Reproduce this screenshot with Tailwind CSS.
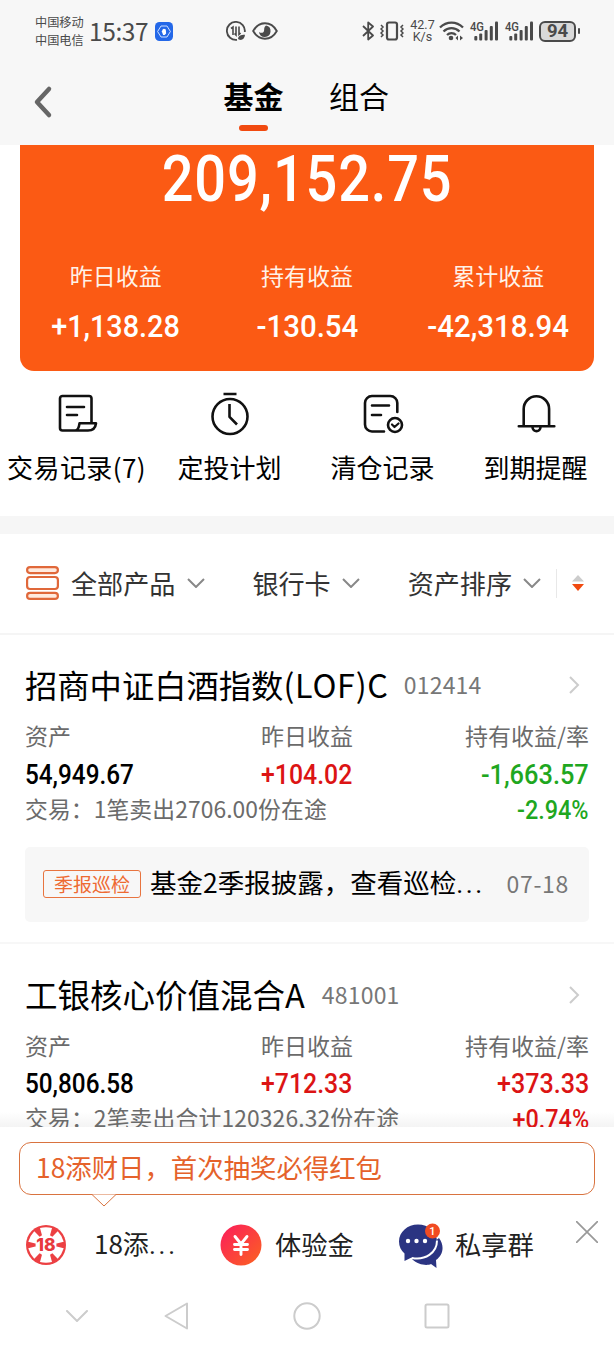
<!DOCTYPE html>
<html lang="zh-CN">
<head>
  <meta charset="UTF-8" />
  <meta name="viewport" content="width=device-width, initial-scale=1.0" />
  <title>基金</title>
  <script src="https://cdn.jsdelivr.net/npm/@tailwindcss/browser@4"></script>
  <style>
    body {
      font-family: 'Noto Sans CJK SC', sans-serif;
    }
    .num {
      font-family: Roboto, 'Noto Sans CJK SC', sans-serif;
    }
  </style>
</head>
<body class="bg-white text-black">
<div class="w-[614px] h-[1350px] overflow-hidden flex flex-col whitespace-nowrap">

  <!-- Header -->
  <header class="h-[145px] shrink-0 bg-[#f7f7f7]">
    <!-- Status bar -->
    <div class="h-[62px] pl-[35px] flex items-center text-[#4a4a4a]">
      <div class="w-[49px] text-[12.2px] leading-[18px]">
        <p>中国移动</p>
        <p>中国电信</p>
      </div>
      <span class="ml-[5px] -mt-px w-[60px] text-[24.500px] leading-8 tracking-[-0.4px]">15:37</span>
      <svg class="ml-[6px] shrink-0" width="18" height="19" viewBox="0 0 18 19" fill="none">
        <rect width="18" height="19" rx="4.5" fill="#2468e8"/>
        <path d="M6 4h6l3.4 5.5L12 15H6L2.6 9.500z" stroke="#cfe0ff" stroke-width="1"/>
        <path d="M6.800 9.500l1-2.200 1-.6 1 .2 1 .7.3 3.900-1.400 1.500H8.100z" fill="#fff"/>
      </svg>
      <svg class="ml-[53px] shrink-0" width="20" height="20" viewBox="0 0 20 20" fill="none" stroke="#4a4a4a" stroke-width="1.8">
        <path d="M18.800 11A9 9 0 1 0 11 18.800"/>
        <path d="M5 7.500L7 6v8M10 5.500v8.500L8.500 12.500M13 5.500v8l1.600-1.500" stroke-width="1.600"/>
        <path d="M12 18c.3-3 2.500-4.200 7-4.200-.2 3.500-2.500 5.700-5.500 5z" fill="#4a4a4a" stroke="none"/>
      </svg>
      <svg class="ml-[6px] shrink-0" width="26" height="18" viewBox="0 0 26 18" fill="none">
        <path d="M1.200 9C4 4 8 1.300 13 1.300S22 4 24.800 9C22 14 18 16.700 13 16.700S4 14 1.200 9z" stroke="#4a4a4a" stroke-width="1.900"/>
        <path d="M14 3.500a5.800 5.800 0 1 1-7 6.500c2 1.500 4.500 1 5-1 .4-2-.2-4 2-5.500z" fill="#4a4a4a"/>
      </svg>
      <svg class="ml-[84px] shrink-0" width="12" height="20" viewBox="0 0 12 20" fill="none" stroke="#4a4a4a" stroke-width="1.800" stroke-linejoin="round">
        <path d="M1 5l10 9.500L6.200 18.500v-17L11 5.500 1 15"/>
      </svg>
      <svg class="ml-[6px] shrink-0" width="24" height="20" viewBox="0 0 24 20" fill="none" stroke="#4a4a4a" stroke-width="1.500">
        <rect x="7" y="1.500" width="10" height="17" rx="2" stroke-width="2.200"/>
        <path d="M1 4l2 2-2 2 2 2-2 2 2 2-2 2M23 4l-2 2 2 2-2 2 2 2-2 2 2 2"/>
      </svg>
      <div class="num ml-[6px] w-[25px] text-center text-[12.500px] leading-[12px]">
        <p>42.7</p>
        <p>K/s</p>
      </div>
      <svg class="ml-[4px] shrink-0" width="25" height="20" viewBox="0 0 25 20" fill="none" stroke="#4a4a4a" stroke-width="2.300">
        <path d="M1 6.500c6.500-6.500 16.500-6.500 23 0M4.500 10.500c4.500-4.500 11.500-4.500 16 0M8 14c2.500-2.500 6.500-2.500 9 0"/>
        <circle cx="12" cy="17" r="2.300" fill="#4a4a4a" stroke="none"/>
        <path d="M19 14.500v5L16.500 17zM21 14.500v5l3-2.500z" fill="#4a4a4a" stroke="none"/>
      </svg>
      <svg class="num ml-[6px] shrink-0 overflow-visible" width="29" height="20" viewBox="0 0 29 20" fill="#4a4a4a">
        <text x="0" y="9.500" font-size="12.500" font-weight="500" textLength="14" lengthAdjust="spacingAndGlyphs">4G</text>
        <rect x="4.300" y="15" width="3" height="4.500" rx="1"/><rect x="9.200" y="12.500" width="3" height="7" rx="1"/><rect x="14.600" y="9" width="3" height="10.500" rx="1"/><rect x="19.800" y="5" width="3" height="14.500" rx="1"/><rect x="25" y=".5" width="3" height="19" rx="1"/>
      </svg>
      <svg class="num ml-[6px] shrink-0 overflow-visible" width="29" height="20" viewBox="0 0 29 20" fill="#4a4a4a">
        <text x="0" y="9.500" font-size="12.500" font-weight="500" textLength="14" lengthAdjust="spacingAndGlyphs">4G</text>
        <rect x="4.300" y="15" width="3" height="4.500" rx="1"/><rect x="9.200" y="12.500" width="3" height="7" rx="1"/><rect x="14.600" y="9" width="3" height="10.500" rx="1"/><rect x="19.800" y="5" width="3" height="14.500" rx="1"/><rect x="25" y=".5" width="3" height="19" rx="1"/>
      </svg>
      <div class="num ml-[5px] w-[37px] h-[21px] rounded-[6px] border-2 border-[#4a4a4a] bg-[#d9d9d9] flex items-center justify-center text-[18.500px] font-bold leading-none">94</div>
      <div class="ml-[2px] w-[2px] h-[6px] rounded bg-[#4a4a4a]"></div>
    </div>

    <!-- Tabs -->
    <div class="h-[83px] flex">
      <svg class="ml-[32px] mt-[23px]" width="22" height="34" viewBox="0 0 22 34" fill="none" stroke="#666" stroke-width="4.500" stroke-linecap="round" stroke-linejoin="round">
        <path d="M17 4L5 17l12 13"/>
      </svg>
      <div class="ml-[169px] w-[61px] flex flex-col items-center">
        <span class="mt-[13px] text-[30px] leading-10 font-bold">基金</span>
        <span class="mt-[10px] w-[29px] h-[6px] rounded-full bg-[#f14a10]"></span>
      </div>
      <span class="ml-[45px] mt-[13px] text-[30px] leading-10">组合</span>
    </div>
  </header>

  <main class="h-[982px] shrink-0 overflow-hidden">
    <!-- Asset card -->
    <section class="num mx-[20px] h-[226px] rounded-b-[14px] bg-[#fb5a14] text-white">
      <p class="h-[68px] text-center text-[65px] leading-[68px] font-medium tracking-[1px]"><span class="inline-block scale-x-[.86]">209,152.75</span></p>
      <div class="pt-[50px] grid grid-cols-3 text-center">
        <div>
          <p class="text-[23px] leading-[30px] text-[#fff2e8]">昨日收益</p>
          <p class="mt-[17px] text-[32px] leading-[32px] font-medium"><span class="inline-block scale-x-[.9]">+1,138.28</span></p>
        </div>
        <div>
          <p class="text-[23px] leading-[30px] text-[#fff2e8]">持有收益</p>
          <p class="mt-[17px] text-[32px] leading-[32px] font-medium"><span class="inline-block scale-x-[.92]">-130.54</span></p>
        </div>
        <div>
          <p class="text-[23px] leading-[30px] text-[#fff2e8]">累计收益</p>
          <p class="mt-[17px] text-[32px] leading-[32px] font-medium"><span class="inline-block scale-x-[.92]">-42,318.94</span></p>
        </div>
      </div>
    </section>

    <!-- Shortcuts -->
    <section class="h-[145px] pt-[21px] w-[612px] grid grid-cols-4 text-[26px] leading-8">
      <div class="flex flex-col items-center gap-[15px]">
        <svg width="44" height="44" viewBox="0 0 44 44" fill="none" stroke="#111" stroke-width="2.600" stroke-linecap="round" stroke-linejoin="round">
          <path d="M36.500 31V6.500a2.500 2.500 0 0 0-2.500-2.500H7.500A2.500 2.500 0 0 0 5 6.500V36a2.500 2.500 0 0 0 2.500 2.500H33c5 0 7.500-3 8-7.200H24.500c-.5 4-1.500 7.200-4.500 7.200M12 15h17M12 23h10"/>
        </svg>
        <span class="tracking-[0.400px]">交易记录(7)</span>
      </div>
      <div class="flex flex-col items-center gap-[15px]">
        <svg width="44" height="44" viewBox="0 0 44 44" fill="none" stroke="#111" stroke-width="2.600" stroke-linejoin="round">
          <circle cx="22" cy="24.500" r="17.500"/>
          <path d="M15.500 2h13M21.500 12v12.800l7.500 7.700"/>
        </svg>
        <span>定投计划</span>
      </div>
      <div class="flex flex-col items-center gap-[15px]">
        <svg width="44" height="44" viewBox="0 0 44 44" fill="none" stroke="#111" stroke-width="2.600" stroke-linecap="round" stroke-linejoin="round">
          <path d="M36.300 20v-9a7 7 0 0 0-7-7H11a7 7 0 0 0-7 7v21.500a7 7 0 0 0 7 7h12M11 13.500h17M11 23h9"/>
          <circle cx="34" cy="33" r="7"/>
          <path d="M31 32.500l2.500 2.500 4-3.500" stroke-width="2.200"/>
        </svg>
        <span>清仓记录</span>
      </div>
      <div class="flex flex-col items-center gap-[15px]">
        <svg width="44" height="44" viewBox="0 0 44 44" fill="none" stroke="#111" stroke-width="2.600" stroke-linecap="round">
          <path d="M9.700 34V17a12.700 12.700 0 0 1 25.400 0v17M4.800 34.300h35.500M18.500 35c0 5.500 8 5.500 8 0"/>
        </svg>
        <span>到期提醒</span>
      </div>
    </section>

    <div class="h-[18px] bg-[#f6f6f6]"></div>

    <!-- Filters -->
    <section class="h-[101px] pl-[26px] pb-px border-b-2 border-[#f5f5f5] flex items-center text-[26.100px] leading-8 text-[#333]">
      <svg width="33" height="34" viewBox="0 0 33 34" fill="#ffeade" stroke="#e0683a" stroke-width="2.200">
        <rect x="1.100" y="1.100" width="30.800" height="6" rx="3"/>
        <rect x="1.100" y="11" width="30.800" height="12" rx="3" fill="#fff"/>
        <rect x="1.100" y="26.900" width="30.800" height="6" rx="3"/>
      </svg>
      <span class="ml-[12px]">全部产品</span>
      <svg class="ml-[12px]" width="18" height="10" viewBox="0 0 18 10" fill="none" stroke="#888" stroke-width="2"><path d="M1 1l8 8 8-8"/></svg>
      <span class="ml-[47px]">银行卡</span>
      <svg class="ml-[11px]" width="18" height="10" viewBox="0 0 18 10" fill="none" stroke="#888" stroke-width="2"><path d="M1 1l8 8 8-8"/></svg>
      <span class="ml-[48px]">资产排序</span>
      <svg class="ml-[11px]" width="18" height="10" viewBox="0 0 18 10" fill="none" stroke="#888" stroke-width="2"><path d="M1 1l8 8 8-8"/></svg>
      <div class="ml-[15px] w-px h-[29px] bg-[#e8e8e8]"></div>
      <svg class="ml-[14px]" width="14" height="16" viewBox="0 0 14 16"><path d="M7 0l6 6.500H1z" fill="#ccc"/><path d="M7 16l6-7H1z" fill="#f14a10"/></svg>
    </section>

    <!-- Fund 1 -->
    <section class="h-[309px] px-[25px] pt-[29px] border-b-2 border-[#f7f7f7]">
      <div class="h-[40px] flex items-center">
        <h2 class="text-[32.300px] leading-10">招商中证白酒指数<span class="tracking-[0.750px]">(LOF)C</span></h2>
        <span class="ml-[15px] text-[23px] tracking-[0.2px] text-[#777]">012414</span>
        <svg class="ml-auto mt-px mr-[9px]" width="12" height="18" viewBox="0 0 12 18" fill="none" stroke="#ccc" stroke-width="2"><path d="M2 1l8 8-8 8"/></svg>
      </div>
      <div class="mt-[16px] grid grid-cols-[236px_1fr_auto] text-[23px] leading-[30px] text-[#6b6b6b]">
        <span>资产</span><span>昨日收益</span><span>持有收益/率</span>
      </div>
      <div class="num mt-[9px] grid grid-cols-[236px_1fr_auto] text-[27px] leading-[32px] font-medium">
        <span><span class="inline-block origin-left scale-x-[.9]">54,949.67</span></span>
        <span class="text-[#dc1414]"><span class="inline-block origin-left scale-x-[.92]">+104.02</span></span>
        <span class="text-[#1fa71f]"><span class="inline-block origin-right scale-x-[.94]">-1,663.57</span></span>
      </div>
      <div class="mt-[2px] h-[32px] flex justify-between text-[22.800px] leading-[31px] text-[#6b6b6b]">
        <span class="tracking-[0.100px]">交易：1笔卖出2706.00份在途</span>
        <span class="num text-[26px] leading-[35px] font-medium text-[#1fa71f]"><span class="inline-block origin-right scale-x-[.9]">-2.94%</span></span>
      </div>
      <div class="mt-[22px] h-[75px] rounded-[5px] bg-[#f7f7f7] pl-[18px] pr-[20px] pb-[2px] flex items-center">
        <span class="w-[98px] h-[28px] rounded-[3px] border border-[#e8743f] text-center text-[19px] leading-[25px] text-[#ee6a32]">季报巡检</span>
        <span class="ml-[9px] -mt-[2px] text-[26.500px]">基金2季报披露，查看巡检<span class="num tracking-[2.500px]">...</span></span>
        <span class="ml-auto text-[23px] tracking-[0.700px] text-[#777]">07-18</span>
      </div>
    </section>

    <!-- Fund 2 -->
    <section class="px-[25px] pt-[30px]">
      <div class="h-[40px] flex items-center">
        <h2 class="text-[32.500px] leading-10">工银核心价值混合A</h2>
        <span class="ml-[17px] text-[23px] tracking-[0.2px] text-[#777]">481001</span>
        <svg class="ml-auto mt-px mr-[9px]" width="12" height="18" viewBox="0 0 12 18" fill="none" stroke="#ccc" stroke-width="2"><path d="M2 1l8 8-8 8"/></svg>
      </div>
      <div class="mt-[16px] grid grid-cols-[236px_1fr_auto] text-[23px] leading-[30px] text-[#6b6b6b]">
        <span>资产</span><span>昨日收益</span><span>持有收益/率</span>
      </div>
      <div class="num mt-[8px] grid grid-cols-[236px_1fr_auto] text-[27px] leading-[32px] font-medium">
        <span><span class="inline-block origin-left scale-x-[.9]">50,806.58</span></span>
        <span class="text-[#dc1414]"><span class="inline-block origin-left scale-x-[.92]">+712.33</span></span>
        <span class="text-[#dc1414]"><span class="inline-block origin-right scale-x-[.93]">+373.33</span></span>
      </div>
      <div class="-mx-[25px] px-[25px] mt-[2px] h-[32px] flex justify-between text-[22.800px] leading-[31px] text-[#6b6b6b] bg-linear-to-b from-white from-30% to-[#f1f1f1] to-90%">
        <span class="tracking-[0.150px]">交易：2笔卖出合计120326.32份在途</span>
        <span class="num text-[26px] leading-[35px] font-medium text-[#dc1414]"><span class="inline-block origin-right scale-x-[.9]">+0.74%</span></span>
      </div>
    </section>
  </main>

  <footer class="h-[223px] shrink-0 bg-white">
    <!-- Promo bubble -->
    <div class="relative mx-[19px] mt-[15px] h-[53px] rounded-[12px] border border-[#d9733f] pl-[16px] text-[26.400px] leading-[48px] text-[#e5622b]">
      18添财日，首次抽奖必得红包
      <svg class="absolute left-[71px] top-[50px]" width="26" height="14" viewBox="0 0 26 14" fill="#fff" stroke="#d9733f"><path d="M1 1.500l12 11.500 12-11.500"/></svg>
    </div>
    <div class="h-[98px] pl-[26px] flex items-center text-[26px] leading-8 text-[#222]">
      <svg class="mt-[2px]" width="40" height="40" viewBox="0 0 40 40">
        <circle cx="20" cy="20" r="20" fill="#ec4043"/>
        <g fill="#fff">
          <path id="chip" d="M14 3q6-1.500 12 0l-3 11h-6z"/>
          <use href="#chip" transform="rotate(60 20 20)"/>
          <use href="#chip" transform="rotate(120 20 20)"/>
          <use href="#chip" transform="rotate(180 20 20)"/>
          <use href="#chip" transform="rotate(240 20 20)"/>
          <use href="#chip" transform="rotate(300 20 20)"/>
          <circle cx="20" cy="20" r="10.500"/>
        </g>
        <text x="20" y="26" font-family="Inter" font-size="17.500" font-weight="800" fill="#e8383e" stroke="#fff" stroke-width="1.500" paint-order="stroke" text-anchor="middle">18</text>
      </svg>
      <span class="ml-[28px] w-[82px] shrink-0">18添<span class="num tracking-[2.800px]">...</span></span>
      <svg class="ml-[44px] mt-[2px] shrink-0" width="42" height="42" viewBox="0 0 42 42" fill="none">
        <defs><linearGradient id="coin" x1="0" y1="0" x2="1" y2="1"><stop offset="0" stop-color="#fb1c5c"/><stop offset="1" stop-color="#fb6320"/></linearGradient></defs>
        <circle cx="21" cy="21" r="20.500" fill="url(#coin)"/>
        <path d="M15 12.500l6 7.500 6-7.500M21 20v10.500M14.500 20.500h13M14.500 25.500h13" stroke="#fff" stroke-width="2.900" stroke-linecap="round"/>
      </svg>
      <span class="ml-[13px] text-[26.300px]">体验金</span>
      <svg class="ml-[45px] mt-[3px] shrink-0" width="44" height="46" viewBox="0 0 44 46">
        <path d="M13 36c6 6 15 7 19 5l5.500 4-.5-8c7-5 9-14 3-22z" fill="#2b3482"/>
        <path d="M19 1.500C8.500 1.500 0 9 0 18.500c0 5 2 9 5.500 12V38l7-3.500C26 38 38 30 38 18.500 38 9 29.500 1.500 19 1.500z" fill="#2b3482"/>
        <path d="M13 35C26 37.500 38 30 38 17.500" fill="none" stroke="#fff" stroke-width="2"/>
        <g fill="#fff"><circle cx="9" cy="18" r="2.200"/><circle cx="17.500" cy="18" r="2.200"/><circle cx="26" cy="18" r="2.200"/></g>
        <circle cx="33.500" cy="8" r="7.500" fill="#f14b22"/>
        <text x="33.500" y="12" font-family="Roboto" font-size="11" font-weight="500" fill="#fff" text-anchor="middle">1</text>
      </svg>
      <span class="ml-[12px] text-[26.300px]">私享群</span>
      <svg class="ml-[42px] mb-[25px] shrink-0" width="22" height="22" viewBox="0 0 22 22" stroke="#999" stroke-width="1.700"><path d="M0 0l22 22M22 0L0 22"/></svg>
    </div>
    <!-- System navigation -->
    <div class="h-[46px] pl-[66px] flex items-center">
      <svg width="22" height="12" viewBox="0 0 22 12" fill="none" stroke="#ccc" stroke-width="2" stroke-linecap="round"><path d="M1 1l10 10L21 1"/></svg>
      <svg class="ml-[76px]" width="25" height="28" viewBox="0 0 25 28" fill="none" stroke="#ccc" stroke-width="2" stroke-linejoin="round"><path d="M23 1.500v25L1.500 14z"/></svg>
      <svg class="ml-[104px]" width="28" height="28" viewBox="0 0 28 28" fill="none" stroke="#ccc" stroke-width="2"><circle cx="14" cy="14" r="12.700"/></svg>
      <svg class="ml-[103px]" width="26" height="26" viewBox="0 0 26 26" fill="none" stroke="#ccc" stroke-width="2"><rect x="1.500" y="1.500" width="23" height="23" rx="1.500"/></svg>
    </div>
  </footer>
</div>
</body>
</html>
